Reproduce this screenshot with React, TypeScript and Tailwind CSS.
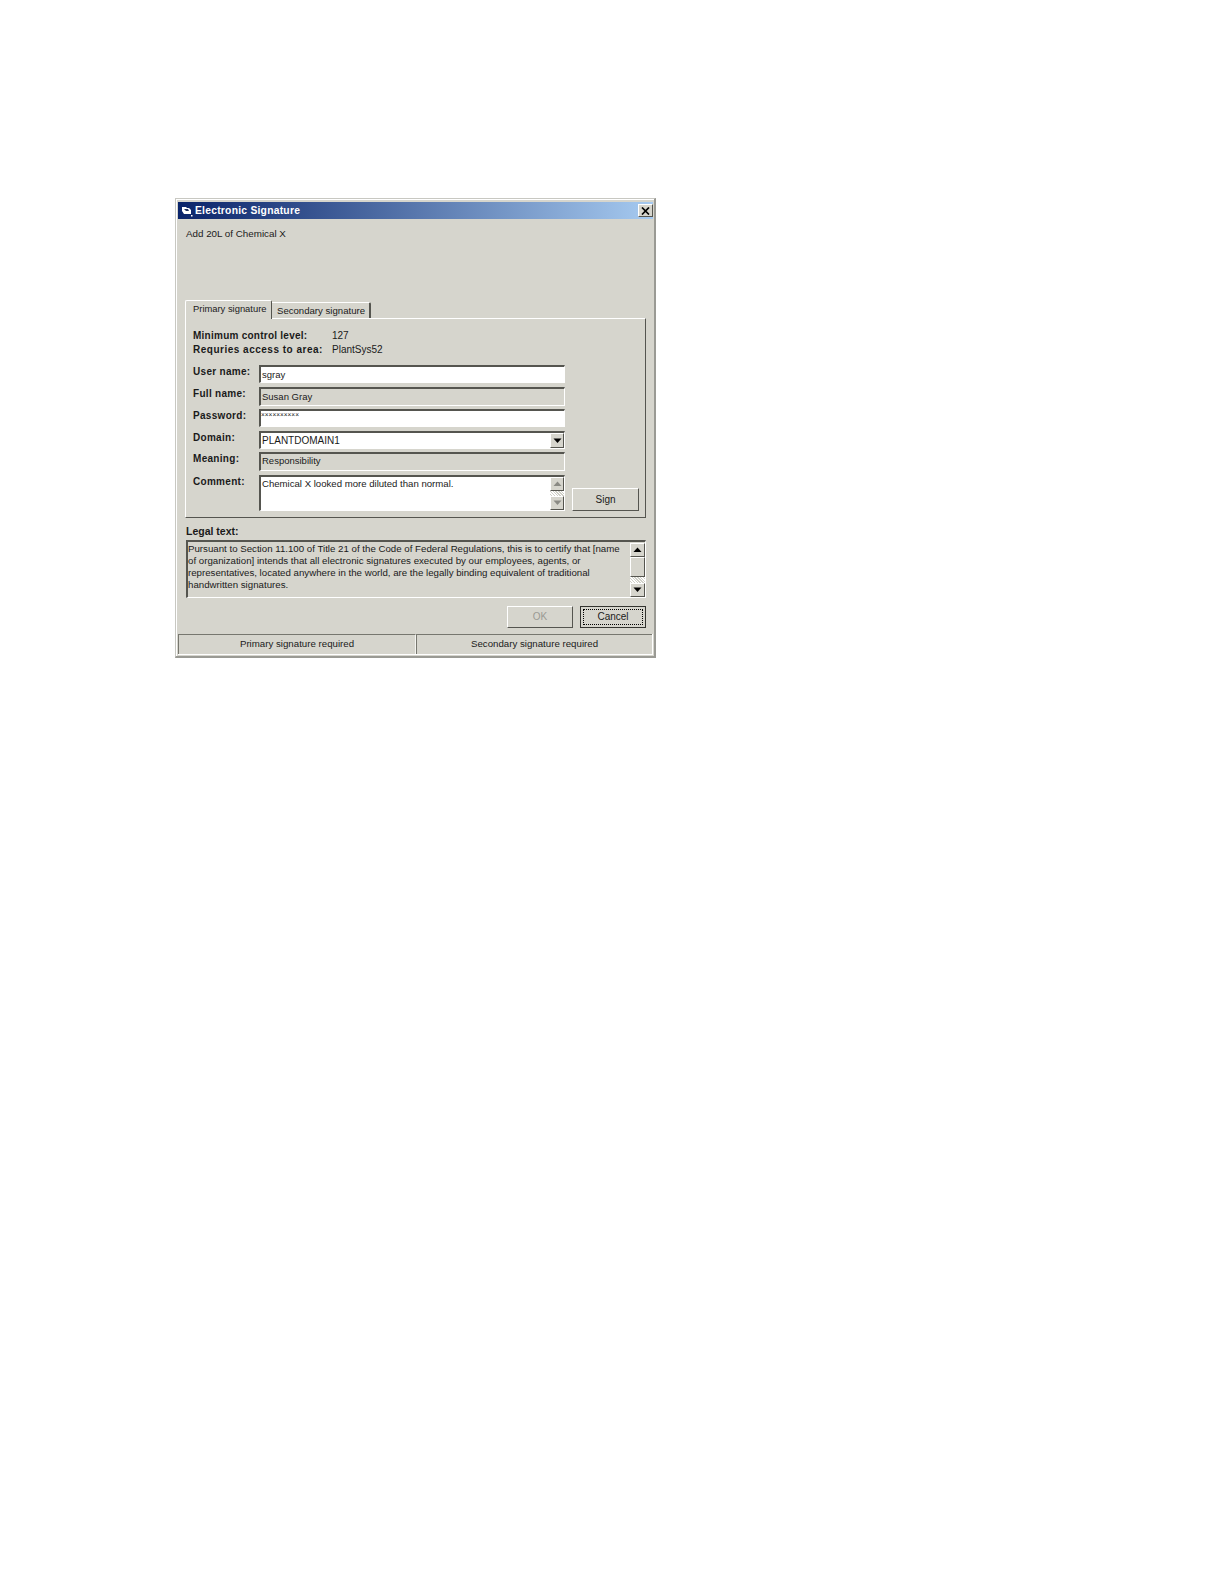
import React from 'react';

const sunken = 'border-t-2 border-l-2 border-t-[#55554f] border-l-[#55554f] border-b border-r border-b-white border-r-white';
const raised = 'border border-t-white border-l-white border-b-[#55554f] border-r-[#55554f]';
const label = 'w-[66px] pt-[1px] leading-[12px] font-bold tracking-[0.3px] text-[10px]';

const Arrow = ({ up, color = '#000' }: { up?: boolean; color?: string }) => (
  <svg width="9" height="6" viewBox="0 0 9 6">
    <path d={up ? 'M4.5 0.5 L8.5 5 L0.5 5 Z' : 'M0.5 0.5 L8.5 0.5 L4.5 5 Z'} fill={color} />
  </svg>
);

const ScrollBtn = ({ up, color, h }: { up?: boolean; color?: string; h: string }) => (
  <div className={`${raised} ${h} w-full flex items-center justify-center bg-[#d6d5cd]`}>
    <Arrow up={up} color={color} />
  </div>
);

const Checker = ({ h }: { h: string }) => (
  <div className={`${h} w-full bg-[repeating-linear-gradient(45deg,#ffffff_0px,#ffffff_1px,#d0d0c8_1px,#d0d0c8_2px)]`} />
);

const Field = ({ name, text, bg, h, mt, lead }: { name: string; text: string; bg: string; h: string; mt: string; lead: string }) => (
  <div className={`flex ${mt}`}>
    <div className={label}>{name}</div>
    <div className={`${sunken} ${bg} ${h} ${lead} w-[306px] pl-[1px] text-[9.5px]`}>{text}</div>
  </div>
);

export default function App() {
  return (
    <div className="min-h-[1584px] bg-white pl-[175px] pt-[198px] font-['Liberation_Sans',Arial,sans-serif] text-[9.7px] text-[#1a1a1a]">
      {/* dialog */}
      <div className="w-[481px] h-[460px] border border-[#c8c8c2] border-r-2 border-b-2 border-r-[#9a9a94] border-b-[#9a9a94] bg-white">
        <div className="h-full border-t border-l border-white bg-[#d6d5cd] pt-[2px] pl-[1px] pr-[1px] pb-[1px] flex flex-col">
          {/* title bar */}
          <div className="h-[17px] flex items-center bg-[linear-gradient(90deg,#0a246a,#a6caf0)] pl-[3px]">
            <svg width="12" height="12" viewBox="0 0 12 12" className="mr-[2px]">
              <path d="M1 2 H5 L6 3 H8 L10 5 V9 H3 L1 6 Z" fill="#fff" />
              <path d="M3 4 H7 L8 6 H5 Z" fill="#20305f" />
              <rect x="10" y="10" width="1.5" height="1.5" fill="#fff" />
            </svg>
            <span className="text-white font-bold text-[10.3px] tracking-[0.25px]">Electronic Signature</span>
            <div className={`${raised} ml-auto w-[15px] h-[13px] bg-[#d6d5cd] flex items-center justify-center`}>
              <svg width="9" height="8" viewBox="0 0 9 8">
                <path d="M1 0.5 L8 7.5 M8 0.5 L1 7.5" stroke="#000" strokeWidth="1.7" />
              </svg>
            </div>
          </div>

          <div className="px-[7px]">
            <div className="h-[81px] pt-[8.5px] pl-[1px] leading-[12px] text-[9.8px]">Add 20L of Chemical X</div>

            {/* tabs */}
            <div className="flex items-end h-[18px] whitespace-nowrap">
              <div className="relative z-10 -mb-px h-[19px] w-[87px] rounded-t-[2px] border-t border-l border-white border-r border-r-[#55554f] bg-[#d6d5cd] pl-[7px] pt-[1.5px] leading-[12px] text-[9.4px]">
                Primary signature
              </div>
              <div className="h-[16px] w-[99px] rounded-tr-[2px] border-t border-r-2 border-t-white border-r-[#55554f] pl-[5px] pt-[1.5px] leading-[12px] text-[9.6px]">
                Secondary signature
              </div>
            </div>

            {/* signature pane */}
            <div className="h-[200px] border-t border-l border-t-white border-l-white border-r border-b border-r-[#55554f] border-b-[#55554f] pl-[7px] pt-[11px]">
              <div className="flex leading-[12px] text-[10px]">
                <div className="w-[139px] font-bold tracking-[0.25px]">Minimum control level:</div>
                <div>127</div>
              </div>
              <div className="flex leading-[12px] mt-[2px] text-[10px]">
                <div className="w-[139px] font-bold tracking-[0.5px]">Requries access to area:</div>
                <div>PlantSys52</div>
              </div>

              <div className="mt-[9px]">
                <Field name="User name:" text="sgray" bg="bg-white" h="h-[18px]" lead="leading-[15px]" mt="" />
                <Field name="Full name:" text="Susan Gray" bg="bg-[#d6d5cd]" h="h-[19px]" lead="leading-[15px]" mt="mt-[4px]" />
                <div className="flex mt-[3px]">
                  <div className={label}>Password:</div>
                  <div className={`${sunken} h-[18px] w-[306px] bg-white text-[6.5px] leading-[8px]`}>××××××××××</div>
                </div>
                <div className="flex mt-[4px]">
                  <div className={label}>Domain:</div>
                  <div className={`${sunken} h-[18px] w-[306px] bg-white flex justify-between pl-[1px] leading-[15px] text-[10px]`}>
                    PLANTDOMAIN1
                    <ScrollBtn h="h-[15px] !w-[14px]" />
                  </div>
                </div>
                <Field name="Meaning:" text="Responsibility" bg="bg-[#d6d5cd]" h="h-[19px]" lead="leading-[14px]" mt="mt-[3px]" />
                <div className="flex mt-[4px]">
                  <div className={label}>Comment:</div>
                  <div className={`${sunken} h-[36px] w-[306px] bg-white flex justify-between pl-[1px] leading-[13px] text-[9.6px]`}>
                    Chemical X looked more diluted than normal.
                    <div className="w-[14px] flex flex-col">
                      <ScrollBtn up color="#8a8a84" h="h-[14px]" />
                      <Checker h="h-[5px]" />
                      <ScrollBtn color="#8a8a84" h="h-[14px]" />
                    </div>
                  </div>
                  <div className={`${raised} self-end ml-[7px] h-[23px] w-[67px] flex items-center justify-center text-[10px]`}>Sign</div>
                </div>
              </div>
            </div>

            {/* legal text */}
            <div className="mt-[7px] pl-[1px] font-bold leading-[12px] text-[10.5px]">Legal text:</div>
            <div className={`${sunken} mt-[3px] ml-[1px] h-[58px] flex justify-between pt-[1px]`}>
              <div className="w-[436px] leading-[12px] text-[9.7px] whitespace-nowrap">
                Pursuant to Section 11.100 of Title 21 of the Code of Federal Regulations, this is to certify that [name<br />
                of organization] intends that all electronic signatures executed by our employees, agents, or<br />
                representatives, located anywhere in the world, are the legally binding equivalent of traditional<br />
                handwritten signatures.
              </div>
              <div className="w-[15px] flex flex-col">
                <ScrollBtn up h="h-[14px]" />
                <div className={`${raised} h-[21px] w-full`} />
                <Checker h="h-[6px]" />
                <ScrollBtn h="h-[14px]" />
              </div>
            </div>

            {/* buttons */}
            <div className="mt-[8px] flex justify-end gap-[7px]">
              <div className={`${raised} h-[22px] w-[66px] pb-[1px] flex items-center justify-center text-[#9a9a94] text-[10px]`}>OK</div>
              <div className="h-[22px] w-[66px] border border-[#33332f] p-[2px]">
                <div className="h-full pb-[1px] border border-dotted border-black flex items-center justify-center text-[10px]">Cancel</div>
              </div>
            </div>
          </div>

          {/* status bar */}
          <div className="mt-[6px] h-[21px] flex border-b border-r border-white">
            <div className="w-[238px] border-t border-l border-t-[#77776f] border-l-[#77776f] border-r border-r-[#f4f4f0] flex items-center justify-center">Primary signature required</div>
            <div className="flex-1 border-t border-l border-t-[#77776f] border-l-[#77776f] flex items-center justify-center">Secondary signature required</div>
          </div>
        </div>
      </div>
    </div>
  );
}
